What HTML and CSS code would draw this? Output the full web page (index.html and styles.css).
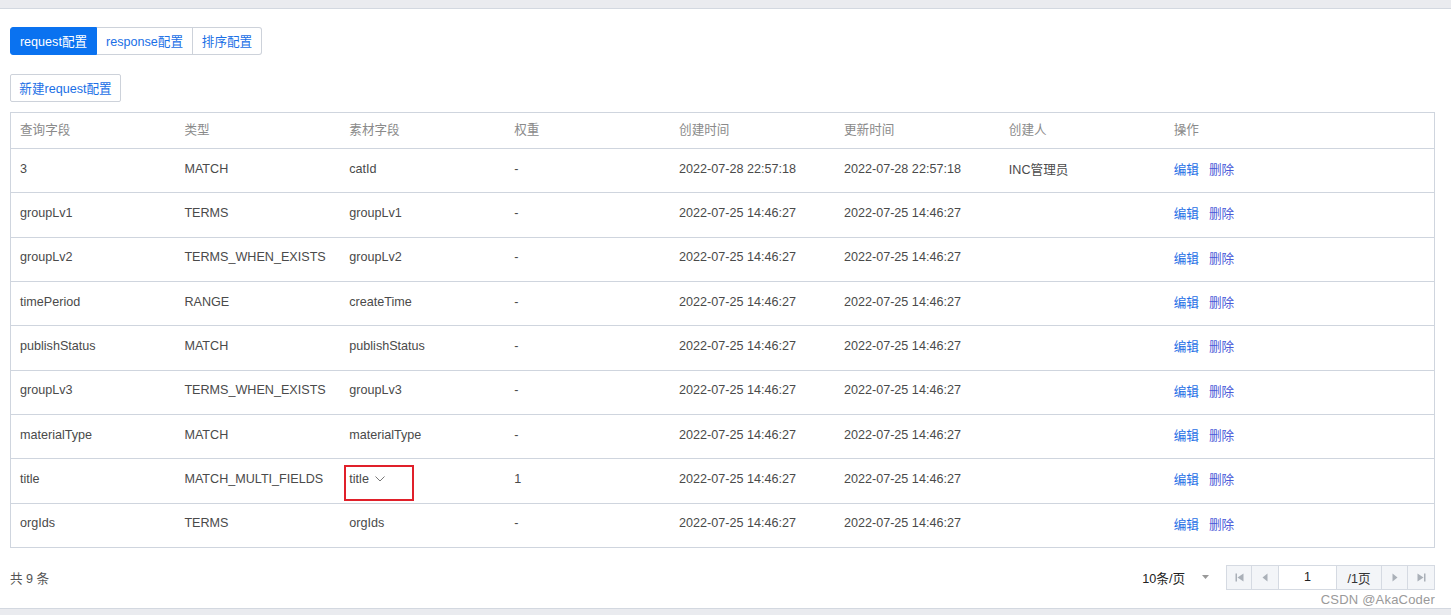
FILE: index.html
```html
<!DOCTYPE html>
<html lang="zh">
<head>
<meta charset="utf-8">
<title>request配置</title>
<link rel="stylesheet" href="styles.css">
</head>
<body>
<div class="topbar"></div>
<main class="content">
  <div class="tabs">
    <span class="tab active">request配置</span>
    <span class="tab">response配置</span>
    <span class="tab">排序配置</span>
  </div>
  <div class="toolbar">
    <button class="btn">新建request配置</button>
  </div>
  <table class="grid">
    <colgroup>
      <col class="c"><col class="c"><col class="c"><col class="c"><col class="c"><col class="c"><col class="c"><col>
    </colgroup>
    <thead>
      <tr><th>查询字段</th><th>类型</th><th>素材字段</th><th>权重</th><th>创建时间</th><th>更新时间</th><th>创建人</th><th>操作</th></tr>
    </thead>
    <tbody>
      <tr><td>3</td><td>MATCH</td><td>catId</td><td>-</td><td>2022-07-28 22:57:18</td><td>2022-07-28 22:57:18</td><td>INC管理员</td><td><a class="edit">编辑</a><a class="del">删除</a></td></tr>
      <tr><td>groupLv1</td><td>TERMS</td><td>groupLv1</td><td>-</td><td>2022-07-25 14:46:27</td><td>2022-07-25 14:46:27</td><td></td><td><a class="edit">编辑</a><a class="del">删除</a></td></tr>
      <tr><td>groupLv2</td><td>TERMS_WHEN_EXISTS</td><td>groupLv2</td><td>-</td><td>2022-07-25 14:46:27</td><td>2022-07-25 14:46:27</td><td></td><td><a class="edit">编辑</a><a class="del">删除</a></td></tr>
      <tr><td>timePeriod</td><td>RANGE</td><td>createTime</td><td>-</td><td>2022-07-25 14:46:27</td><td>2022-07-25 14:46:27</td><td></td><td><a class="edit">编辑</a><a class="del">删除</a></td></tr>
      <tr><td>publishStatus</td><td>MATCH</td><td>publishStatus</td><td>-</td><td>2022-07-25 14:46:27</td><td>2022-07-25 14:46:27</td><td></td><td><a class="edit">编辑</a><a class="del">删除</a></td></tr>
      <tr><td>groupLv3</td><td>TERMS_WHEN_EXISTS</td><td>groupLv3</td><td>-</td><td>2022-07-25 14:46:27</td><td>2022-07-25 14:46:27</td><td></td><td><a class="edit">编辑</a><a class="del">删除</a></td></tr>
      <tr><td>materialType</td><td>MATCH</td><td>materialType</td><td>-</td><td>2022-07-25 14:46:27</td><td>2022-07-25 14:46:27</td><td></td><td><a class="edit">编辑</a><a class="del">删除</a></td></tr>
      <tr><td>title</td><td>MATCH_MULTI_FIELDS</td><td><span class="sel">title<svg class="chev" width="10" height="6" viewBox="0 0 10 6"><path d="M0.5 0.5 L5 5 L9.5 0.5" fill="none" stroke="#777" stroke-width="1"/></svg><span class="mark"></span></span></td><td>1</td><td>2022-07-25 14:46:27</td><td>2022-07-25 14:46:27</td><td></td><td><a class="edit">编辑</a><a class="del">删除</a></td></tr>
      <tr><td>orgIds</td><td>TERMS</td><td>orgIds</td><td>-</td><td>2022-07-25 14:46:27</td><td>2022-07-25 14:46:27</td><td></td><td><a class="edit">编辑</a><a class="del">删除</a></td></tr>
    </tbody>
  </table>
  <div class="footer">
    <span class="total">共 9 条</span>
    <div class="pagesize">
      <span>10条/页</span>
      <svg width="7" height="4" viewBox="0 0 7 4"><path d="M0 0 L7 0 L3.5 4 Z" fill="#999"/></svg>
    </div>
    <div class="pager">
      <span class="pbtn w25"><svg width="9" height="9" viewBox="0 0 9 9"><rect x="0.5" y="0.5" width="1.5" height="8" fill="#aab0b8"/><path d="M8.5 0.5 L2.5 4.5 L8.5 8.5 Z" fill="#aab0b8"/></svg></span>
      <span class="pbtn w27"><svg width="6" height="9" viewBox="0 0 6 9"><path d="M5.5 0.5 L0.5 4.5 L5.5 8.5 Z" fill="#aab0b8"/></svg></span>
      <span class="pinput">1</span>
      <span class="plabel">/1页</span>
      <span class="pbtn w26"><svg width="6" height="9" viewBox="0 0 6 9"><path d="M0.5 0.5 L5.5 4.5 L0.5 8.5 Z" fill="#aab0b8"/></svg></span>
      <span class="pbtn w26 last"><svg width="9" height="9" viewBox="0 0 9 9"><path d="M0.5 0.5 L6.5 4.5 L0.5 8.5 Z" fill="#aab0b8"/><rect x="7" y="0.5" width="1.5" height="8" fill="#aab0b8"/></svg></span>
    </div>
    <span class="watermark">CSDN @AkaCoder</span>
  </div>
</main>
<div class="bottombar"></div>
</body>
</html>
```
FILE: styles.css
```css
html, body {
  margin: 0;
  padding: 0;
  background: #fff;
  font-family: "Liberation Sans", Arial, "Noto Sans CJK SC", sans-serif;
  font-size: 12.6px;
  color: #4a4a4a;
  height: 615px;
  overflow: hidden;
}
.topbar {
  height: 8px;
  background: #eaebef;
  border-bottom: 1px solid #d3d8e0;
}
.content {
  padding: 18px 16px 0 10px;
  height: 599px;
  box-sizing: border-box;
}
.tabs {
  display: flex;
  height: 28px;
}
.tab {
  display: flex;
  align-items: center;
  justify-content: center;
  white-space: nowrap;
  border: 1px solid #cdd2da;
  border-left: none;
  color: #1a6fe6;
  box-sizing: border-box;
  height: 28px;
  padding-bottom: 2px;
}
.tab:first-child {
  border-left: 1px solid #0a72f0;
  border-radius: 3px 0 0 3px;
}
.tab:last-child {
  border-radius: 0 3px 3px 0;
}
.tab.active {
  background: #0a72f0;
  border-color: #0a72f0;
  color: #fff;
  width: 87px;
}
.tab:nth-child(2) { width: 96px; }
.tab:nth-child(3) { width: 69px; }
.toolbar {
  margin-top: 19px;
  height: 28px;
}
.btn {
  height: 28px;
  width: 111px;
  padding: 0 0 2px;
  background: #fff;
  border: 1px solid #cdd2da;
  border-radius: 2px;
  color: #1a6fe6;
  font: inherit;
  text-align: center;
  white-space: nowrap;
}
.grid {
  margin-top: 10px;
  width: 1425px;
  border-collapse: collapse;
  table-layout: fixed;
  border: 1px solid #cfd5de;
}
.grid col.c { width: 164.9px; }
.grid th {
  height: 30px;
  text-align: left;
  font-weight: normal;
  color: #8a8a8a;
  padding: 0 0 5px 9px;
  border-bottom: 1px solid #cfd5de;
}
.grid td {
  height: 39.33px;
  padding: 0 0 4px 9px;
  border-bottom: 1px solid #cfd5de;
  white-space: nowrap;
  color: #4a4a4a;
}
.grid a {
  display: inline-block;
  margin-right: 10px;
  cursor: pointer;
}
.grid a.edit { color: #1f6fe6; }
.grid a.del { color: #4a5ad8; }
.sel {
  position: relative;
  display: inline-flex;
  align-items: center;
  gap: 6px;
}
.chev { margin-top: 1px; }
.mark {
  position: absolute;
  left: -5px;
  top: -7px;
  width: 66px;
  height: 32px;
  border: 2px solid #e0202a;
}
.footer {
  position: relative;
  display: flex;
  align-items: center;
  margin-top: 17px;
  height: 25px;
}
.total {
  flex: 1;
  color: #555;
}
.pagesize {
  display: flex;
  align-items: center;
  gap: 17px;
  margin-right: 17px;
  color: #222;
}
.pager {
  display: flex;
  height: 25px;
  border: 1px solid #d5dae2;
  box-sizing: border-box;
}
.pbtn, .plabel {
  display: flex;
  align-items: center;
  justify-content: center;
  background: #f3f5f8;
  border-right: 1px solid #d5dae2;
  box-sizing: border-box;
}
.pbtn.last { border-right: none; }
.w25 { width: 25px; }
.w27 { width: 27px; }
.w26 { width: 26px; }
.pinput {
  width: 58px;
  display: flex;
  align-items: center;
  justify-content: center;
  background: #fff;
  border-right: 1px solid #d5dae2;
  color: #222;
  box-sizing: border-box;
}
.plabel {
  width: 45px;
  color: #333;
}
.watermark {
  position: absolute;
  right: 0;
  top: 27px;
  color: #9a9a9a;
  font-size: 13px;
  letter-spacing: 0.2px;
}
.bottombar {
  height: 6px;
  background: #eaebef;
  border-top: 1px solid #d3d8e0;
}
```
